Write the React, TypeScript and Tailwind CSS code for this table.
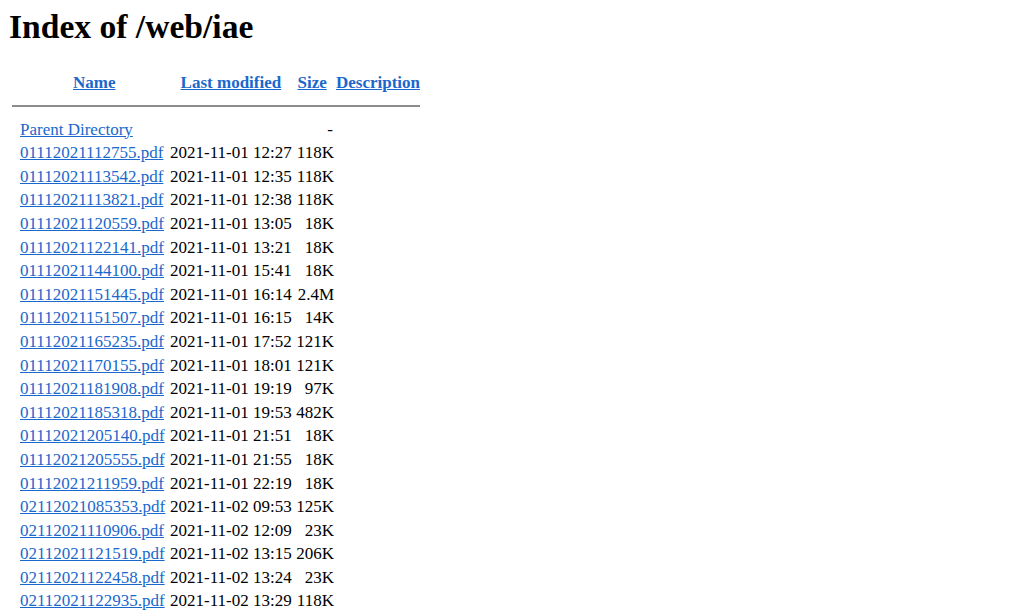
import React from 'react';

type Entry = { name: string; date: string; size: string };

const files: Entry[] = [
  { name: '01112021112755.pdf', date: '2021-11-01 12:27', size: '118K' },
  { name: '01112021113542.pdf', date: '2021-11-01 12:35', size: '118K' },
  { name: '01112021113821.pdf', date: '2021-11-01 12:38', size: '118K' },
  { name: '01112021120559.pdf', date: '2021-11-01 13:05', size: '18K' },
  { name: '01112021122141.pdf', date: '2021-11-01 13:21', size: '18K' },
  { name: '01112021144100.pdf', date: '2021-11-01 15:41', size: '18K' },
  { name: '01112021151445.pdf', date: '2021-11-01 16:14', size: '2.4M' },
  { name: '01112021151507.pdf', date: '2021-11-01 16:15', size: '14K' },
  { name: '01112021165235.pdf', date: '2021-11-01 17:52', size: '121K' },
  { name: '01112021170155.pdf', date: '2021-11-01 18:01', size: '121K' },
  { name: '01112021181908.pdf', date: '2021-11-01 19:19', size: '97K' },
  { name: '01112021185318.pdf', date: '2021-11-01 19:53', size: '482K' },
  { name: '01112021205140.pdf', date: '2021-11-01 21:51', size: '18K' },
  { name: '01112021205555.pdf', date: '2021-11-01 21:55', size: '18K' },
  { name: '01112021211959.pdf', date: '2021-11-01 22:19', size: '18K' },
  { name: '02112021085353.pdf', date: '2021-11-02 09:53', size: '125K' },
  { name: '02112021110906.pdf', date: '2021-11-02 12:09', size: '23K' },
  { name: '02112021121519.pdf', date: '2021-11-02 13:15', size: '206K' },
  { name: '02112021122458.pdf', date: '2021-11-02 13:24', size: '23K' },
  { name: '02112021122935.pdf', date: '2021-11-02 13:29', size: '118K' },
];

const link = 'text-[#1a68cc] underline';

const Row: React.FC<{ name: string; date: string; size: string }> = ({ name, date, size }) => (
  <div className="flex h-[23.6px] items-center whitespace-nowrap leading-[23.6px]">
    <div className="w-[8px]" />
    <div className="w-[150px]">
      <a href="#" className={link}>{name}</a>
    </div>
    <div className="w-[126px]">{date}</div>
    <div className="w-[38px] text-right">{size}</div>
  </div>
);

export default function App() {
  return (
    <div className="min-h-[613px] bg-white px-[9px] font-['Liberation_Serif',serif] text-[17px] text-black">
      <h1 className="pt-[7px] text-[33.6px] font-bold leading-[40px]">Index of /web/iae</h1>

      <div className="mt-[24px] w-[411px] pl-[3px]">
        {/* header */}
        <div className="flex h-[23.6px] items-center whitespace-nowrap font-bold leading-[23.6px]">
          <div className="w-[8px]" />
          <div className="w-[150px] text-center">
            <a href="#" className={link}>Name</a>
          </div>
          <div className="w-[126px] text-center">
            <a href="#" className={link}>Last modified</a>
          </div>
          <div className="w-[38px] text-center">
            <a href="#" className={link}>Size</a>
          </div>
          <div className="flex-1 pl-[5px] text-center">
            <a href="#" className={link}>Description</a>
          </div>
        </div>

        {/* separator */}
        <div className="flex h-[23px] items-center">
          <div className="h-[2px] w-full bg-[#8c8c8c]" />
        </div>

        <div className="flex h-[23.6px] items-center whitespace-nowrap leading-[23.6px]">
          <div className="w-[8px]" />
          <div className="w-[150px]">
            <a href="#" className={link}>Parent Directory</a>
          </div>
          <div className="w-[126px]" />
          <div className="w-[38px] pr-[1px] text-right">-</div>
        </div>

        {files.map((f) => (
          <Row key={f.name} name={f.name} date={f.date} size={f.size} />
        ))}
      </div>
    </div>
  );
}
